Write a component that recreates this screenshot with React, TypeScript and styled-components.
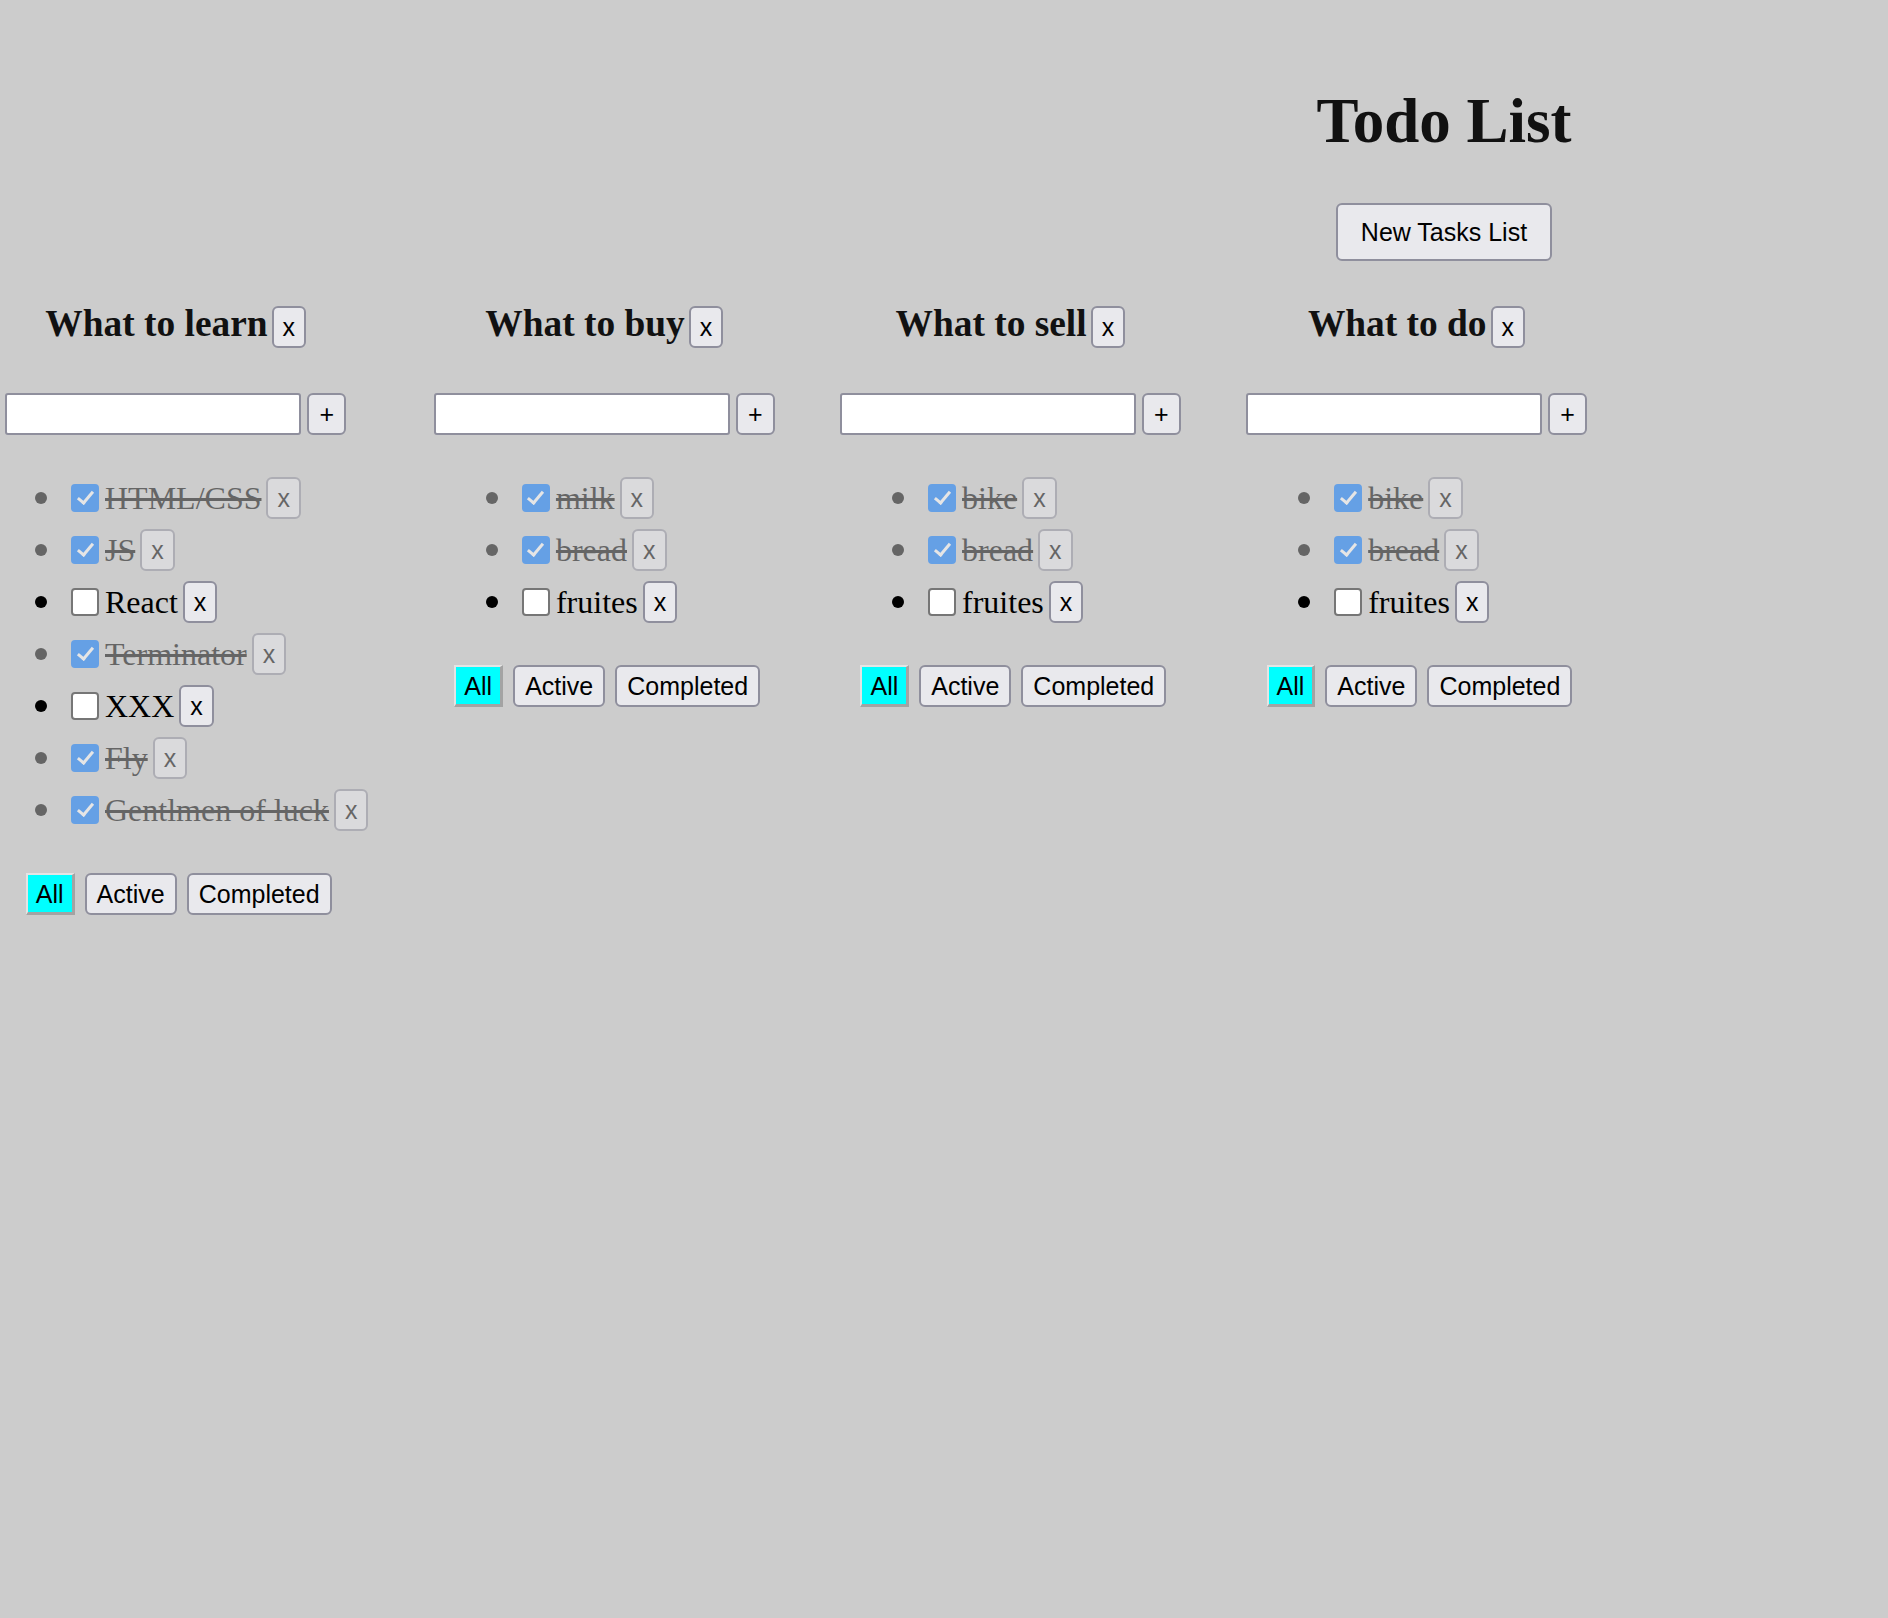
import React from "react";
import styled, { createGlobalStyle, css } from "styled-components";

const GlobalStyle = createGlobalStyle`
  html, body {
    margin: 0;
    padding: 0;
    background: #cccccc;
  }
  body {
    font-family: "Liberation Serif", "Times New Roman", serif;
    color: #000;
    width: 1888px;
    min-height: 1618px;
    overflow: hidden;
  }
`;

type Task = { title: string; done: boolean };
type TodoList = { title: string; tasks: Task[] };

const lists: TodoList[] = [
  {
    title: "What to learn",
    tasks: [
      { title: "HTML/CSS", done: true },
      { title: "JS", done: true },
      { title: "React", done: false },
      { title: "Terminator", done: true },
      { title: "XXX", done: false },
      { title: "Fly", done: true },
      { title: "Gentlmen of luck", done: true },
    ],
  },
  {
    title: "What to buy",
    tasks: [
      { title: "milk", done: true },
      { title: "bread", done: true },
      { title: "fruites", done: false },
    ],
  },
  {
    title: "What to sell",
    tasks: [
      { title: "bike", done: true },
      { title: "bread", done: true },
      { title: "fruites", done: false },
    ],
  },
  {
    title: "What to do",
    tasks: [
      { title: "bike", done: true },
      { title: "bread", done: true },
      { title: "fruites", done: false },
    ],
  },
];

const Page = styled.div`
  display: flex;
  flex-direction: column;
`;

const Header = styled.header`
  margin-left: 1000px;
  display: flex;
  flex-direction: column;
  align-items: center;
`;

const Title = styled.h1`
  margin: 85px 0 0;
  font-family: "Liberation Serif", "Times New Roman", serif;
  font-weight: bold;
  font-size: 63px;
  line-height: 72px;
  color: #111;
`;

const Button = styled.button<{ $active?: boolean }>`
  box-sizing: border-box;
  height: 42px;
  padding: 0 10px;
  margin: 0;
  font-family: "Liberation Sans", Arial, sans-serif;
  font-size: 25px;
  line-height: 28px;
  color: #000;
  background: #e9e9ed;
  border: 2px solid #8f8f9d;
  border-radius: 6px;
  cursor: pointer;
  ${(p) =>
    p.$active &&
    css`
      padding: 0 8px;
      background: #00ffff;
      border-width: 2px 3px 3px 2px;
      border-style: solid;
      border-color: #e4e4e4 #a3a3a3 #a3a3a3 #e4e4e4;
      border-radius: 0;
    `}
`;

const NewListButton = styled(Button)`
  height: 58px;
  padding: 0 22.5px;
  margin-top: 46px;
`;

const Board = styled.div`
  display: flex;
  align-items: flex-start;
  gap: 65.5px;
  margin-left: -17px;
`;

const Column = styled.section`
  display: flex;
  flex-direction: column;
  align-items: center;
`;

const ListTitle = styled.h3`
  margin: 41px 0 0;
  font-family: "Liberation Serif", "Times New Roman", serif;
  font-weight: bold;
  font-size: 37.4px;
  line-height: 44px;
  color: #111;
  white-space: nowrap;
`;

const TitleRemove = styled(Button)`
  padding: 0 9px;
  margin-left: 4px;
  vertical-align: baseline;
`;

const AddRow = styled.div`
  display: flex;
  gap: 6px;
  margin-top: 45px;
`;

const TextInput = styled.input`
  box-sizing: border-box;
  width: 296px;
  height: 42px;
  margin: 0;
  padding: 0 6px;
  background: #fff;
  border: 2px solid #8f8f9d;
  border-radius: 3px;
  font-family: "Liberation Sans", Arial, sans-serif;
  font-size: 25px;
`;

const AddButton = styled(Button)`
  padding: 0 10px;
`;

const Tasks = styled.ul`
  align-self: stretch;
  list-style: none;
  margin: 37px 0 37px;
  padding: 0 0 0 80px;
`;

const TaskItem = styled.li<{ $done: boolean }>`
  display: flex;
  align-items: center;
  height: 52px;
  white-space: nowrap;
  opacity: ${(p) => (p.$done ? 0.5 : 1)};

  &::before {
    content: "";
    flex: none;
    width: 12px;
    height: 12px;
    border-radius: 50%;
    background: #000;
    margin-left: -28px;
    margin-right: 16px;
  }
`;

const Check = styled.input`
  appearance: none;
  -webkit-appearance: none;
  position: relative;
  box-sizing: border-box;
  flex: none;
  width: 28px;
  height: 28px;
  margin: 0 6px 0 8px;
  background: #fff;
  border: 2.5px solid #767676;
  border-radius: 4px;

  &:checked {
    background: #0075ff;
    border-color: #0075ff;
  }

  &:checked::after {
    content: "";
    position: absolute;
    left: 7.5px;
    top: 2px;
    width: 6px;
    height: 13px;
    border: solid #fff;
    border-width: 0 3.5px 3.5px 0;
    transform: rotate(40deg);
  }
`;

const TaskText = styled.span<{ $done: boolean }>`
  font-family: "Liberation Serif", "Times New Roman", serif;
  font-size: 32px;
  line-height: normal;
  color: #000;
  text-decoration: ${(p) => (p.$done ? "line-through" : "none")};
`;

const TaskRemove = styled(Button)`
  padding: 0 9px;
  margin-left: 5px;
`;

const Filters = styled.div`
  display: flex;
  justify-content: center;
  gap: 10px;
  padding-left: 6px;
`;

function TodoColumn({ list }: { list: TodoList }) {
  return (
    <Column>
      <ListTitle>
        {list.title}
        <TitleRemove>x</TitleRemove>
      </ListTitle>
      <AddRow>
        <TextInput type="text" />
        <AddButton>+</AddButton>
      </AddRow>
      <Tasks>
        {list.tasks.map((t, i) => (
          <TaskItem key={i} $done={t.done}>
            <Check type="checkbox" defaultChecked={t.done} />
            <TaskText $done={t.done}>{t.title}</TaskText>
            <TaskRemove>x</TaskRemove>
          </TaskItem>
        ))}
      </Tasks>
      <Filters>
        <Button $active>All</Button>
        <Button>Active</Button>
        <Button>Completed</Button>
      </Filters>
    </Column>
  );
}

export default function App() {
  return (
    <>
      <GlobalStyle />
      <Page>
        <Header>
          <Title>Todo List</Title>
          <NewListButton>New Tasks List</NewListButton>
        </Header>
        <Board>
          {lists.map((l, i) => (
            <TodoColumn key={i} list={l} />
          ))}
        </Board>
      </Page>
    </>
  );
}
